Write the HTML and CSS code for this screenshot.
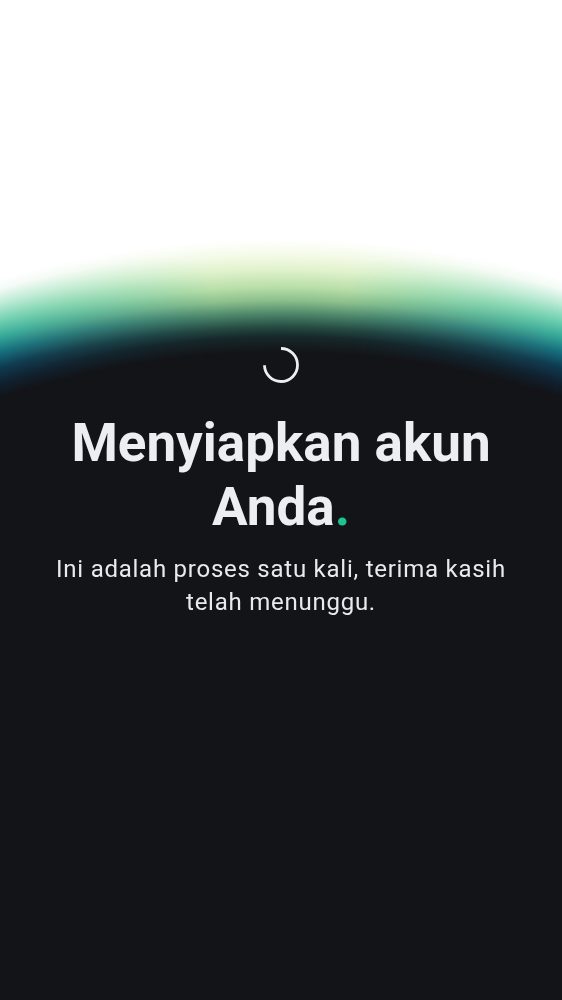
FILE: index.html
```html
<!DOCTYPE html>
<html lang="id">
<head>
<meta charset="utf-8">
<title>Menyiapkan akun Anda</title>
<link rel="stylesheet" href="styles.css">
</head>
<body>
<main class="screen">
  <div class="tint">
    <div class="content">
      <svg class="spinner" width="40" height="40" viewBox="0 0 40 40" aria-hidden="true">
        <circle cx="20" cy="20" r="16.5" fill="none" stroke="#eceef2" stroke-width="2.8" stroke-dasharray="77 104" transform="rotate(-90 20 20)"/>
      </svg>
      <h1 class="title">Menyiapkan akun Anda<span class="dot">.</span></h1>
      <p class="subtitle">Ini adalah proses satu kali, terima kasih telah menunggu.</p>
    </div>
  </div>
</main>
</body>
</html>
```

FILE: styles.css
```css
* { box-sizing: border-box; }
html, body { margin: 0; padding: 0; }
body {
  font-family: Roboto, "Noto Sans", "Liberation Sans", sans-serif;
  background: #131418;
}
.screen {
  width: 562px;
  height: 1000px;
  overflow: hidden;
  background: radial-gradient(ellipse 1035px 1172px at 281px 1525px,
    #131418 0%, #131418 99.9%, #10202e 101.0%, #0f3a52 102.4%, #157080 103.7%,
    #37ab9a 105.0%, #6ccfb0 106.2%, #bdebd6 107.7%, #f4fbf7 108.9%, #ffffff 109.8%);
}
.tint {
  height: 100%;
  background: radial-gradient(ellipse 1035px 1172px at 281px 1525px,
    #131418 0%, #131418 100.1%, #17282a 101.4%, #244a42 102.2%, #4f8a6c 103.4%,
    #8cc08c 104.5%, #b8dea8 105.6%, #e0f2cc 107.1%, #f5fae8 108.4%, #ffffff 109.7%);
  -webkit-mask-image:
    linear-gradient(90deg, transparent 0%, #000 38%, #000 62%, transparent 100%),
    radial-gradient(ellipse 1035px 1172px at 281px 1525px, #000 99.8%, transparent 99.9%);
  mask-image:
    linear-gradient(90deg, transparent 0%, #000 38%, #000 62%, transparent 100%),
    radial-gradient(ellipse 1035px 1172px at 281px 1525px, #000 99.8%, transparent 99.9%);
  display: flex;
  flex-direction: column;
  align-items: center;
}
.content {
  padding: 345px 40px 0;
  display: flex;
  flex-direction: column;
  align-items: center;
  text-align: center;
}
.spinner {
  display: block;
  width: 40px;
  height: 40px;
}
.title {
  margin: 26px 0 0;
  font-size: 53px;
  line-height: 64px;
  font-weight: 700;
  color: #eceef2;
}
.dot { color: #1fc38f; }
.subtitle {
  margin: 14px 0 0;
  font-size: 24px;
  line-height: 33px;
  font-weight: 400;
  color: #e8eaee;
  letter-spacing: 0.75px;
}
```
